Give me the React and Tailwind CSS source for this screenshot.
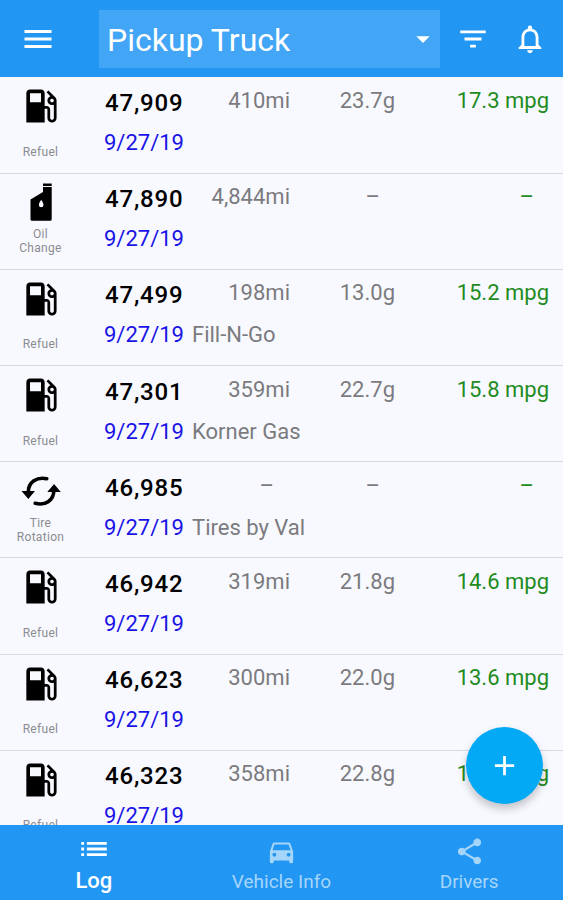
import React from 'react';
import {
  MdMenu,
  MdArrowDropDown,
  MdFilterList,
  MdNotificationsNone,
  MdLocalGasStation,
  MdAdd,
  MdList,
  MdDirectionsCar,
  MdShare,
} from 'react-icons/md';

const entries = [
  { type: 'refuel', odometer: '47,909', date: '9/27/19', distance: '410mi', volume: '23.7g', economy: '17.3 mpg' },
  { type: 'oil', odometer: '47,890', date: '9/27/19', distance: '4,844mi' },
  { type: 'refuel', odometer: '47,499', date: '9/27/19', place: 'Fill-N-Go', distance: '198mi', volume: '13.0g', economy: '15.2 mpg' },
  { type: 'refuel', odometer: '47,301', date: '9/27/19', place: 'Korner Gas', distance: '359mi', volume: '22.7g', economy: '15.8 mpg' },
  { type: 'tire', odometer: '46,985', date: '9/27/19', place: 'Tires by Val' },
  { type: 'refuel', odometer: '46,942', date: '9/27/19', distance: '319mi', volume: '21.8g', economy: '14.6 mpg' },
  { type: 'refuel', odometer: '46,623', date: '9/27/19', distance: '300mi', volume: '22.0g', economy: '13.6 mpg' },
  { type: 'refuel', odometer: '46,323', date: '9/27/19', distance: '358mi', volume: '22.8g', economy: '15.7 mpg' },
];

function OilIcon() {
  return (
    <svg viewBox="0 0 44 44" className="size-11" fill="currentColor">
      <path d="M24 2.500h8.700v2.500H24z" />
      <path
        fillRule="evenodd"
        d="M24 6h8.700V38.300a1.500 1.500 0 0 1-1.500 1.500H13a1.500 1.500 0 0 1-1.500-1.500V18.500L24 11zM22.200 18.800c-1.300 2.100-2.300 3.600-2.300 5.200a2.300 2.300 0 0 0 4.600 0c0-1.600-1-3.100-2.300-5.200z"
      />
    </svg>
  );
}

function RotationIcon() {
  return (
    <svg viewBox="0 0 44 44" className="size-11" fill="currentColor">
      <path
        d="M9.300 23C9.300 13 18 7.500 27.800 9.700M34.800 21.500C34.800 31.500 26 37 16.200 34.300"
        fill="none"
        stroke="currentColor"
        strokeWidth="3.600"
        strokeLinecap="round"
      />
      <path d="M2.500 22h13.500l-6.700 8zM28.300 23h13.500l-6.700-8z" />
    </svg>
  );
}

const types = {
  refuel: { icon: <MdLocalGasStation className="size-11" />, label: 'Refuel' },
  oil: { icon: <OilIcon />, label: <>Oil<br />Change</> },
  tire: { icon: <RotationIcon />, label: <>Tire<br />Rotation</> },
};

function Entry({ entry }) {
  const { icon, label } = types[entry.type];
  return (
    <li className="flex h-[96.2px] shrink-0 border-b-[1.5px] border-[#d8d8de]">
      <div className="flex h-[81.600px] w-[81px] shrink-0 flex-col items-center justify-between pt-[7px] text-black">
        {icon}
        <span className="text-center text-[12px] leading-[14px] tracking-[0.3px] text-[#8c8c90]">{label}</span>
      </div>
      <div className="grow pt-[10.600px] pl-[23px]">
        <div className="flex text-[22px] leading-[26px] text-[#7b7b7e]">
          <span className="w-[80px] pt-[2px] pl-px text-[24px] font-medium tracking-[0.8px] whitespace-nowrap text-black">
            {entry.odometer}
          </span>
          <span className={entry.distance ? 'w-[106px] text-right' : 'mr-[16px] w-[90px] text-right'}>{entry.distance || '–'}</span>
          <span className={entry.volume ? 'w-[105px] text-right' : 'mr-[15px] w-[90px] text-right'}>{entry.volume || '–'}</span>
          <span className={entry.economy ? 'w-[154px] text-right text-[#228b22]' : 'w-[139px] text-right text-[#228b22]'}>
            {entry.economy || '–'}
          </span>
        </div>
        <div className="mt-[14px] flex gap-[9px] text-[22px] leading-[26px]">
          <span className="w-[79px] text-[#1a14e6]">{entry.date}</span>
          <span className="text-[#7b7b7e]">{entry.place}</span>
        </div>
      </div>
    </li>
  );
}

export default function App() {
  return (
    <div className="relative flex h-[900px] w-[563px] flex-col overflow-hidden bg-[#f8f9ff] font-['Roboto','Liberation_Sans',sans-serif]">
      <header className="flex h-[77px] shrink-0 items-center bg-[#2196f3] pl-5 text-white">
        <MdMenu className="size-9" />
        <button className="ml-[43px] flex h-[58px] w-[341px] items-center justify-between bg-[#42a5f5] pr-[1px] pl-2 text-[32px]">
          <span className="pt-[3px]">Pickup Truck</span>
          <MdArrowDropDown className="size-8" />
        </button>
        <MdFilterList className="ml-[16px] size-[34px]" />
        <MdNotificationsNone className="ml-[23px] size-[34px]" />
      </header>
      <ul className="flex min-h-0 grow flex-col overflow-hidden pt-[0.4px]">
        {entries.map((entry) => (
          <Entry key={entry.odometer} entry={entry} />
        ))}
      </ul>
      <nav className="grid h-[75px] shrink-0 grid-cols-3 bg-[#2196f3] text-[19px] leading-6 text-[#a6d5fa]">
        <button className="flex flex-col items-center pt-[7px] text-[22px] text-white">
          <MdList className="mb-[3px] size-[34px]" />
          <span className="font-medium">Log</span>
        </button>
        <button className="flex flex-col items-center pt-[11px]">
          <MdDirectionsCar className="mb-[3px] size-[31px]" />
          Vehicle Info
        </button>
        <button className="flex flex-col items-center pt-[11px]">
          <MdShare className="mb-[3px] size-[31px]" />
          Drivers
        </button>
      </nav>
      <button className="absolute right-[20px] bottom-[96px] flex size-[77px] items-center justify-center rounded-full bg-[#03a9f4] text-white shadow-[0_5px_8px_rgba(0,0,0,0.22)]">
        <MdAdd className="size-[33px]" />
      </button>
    </div>
  );
}
